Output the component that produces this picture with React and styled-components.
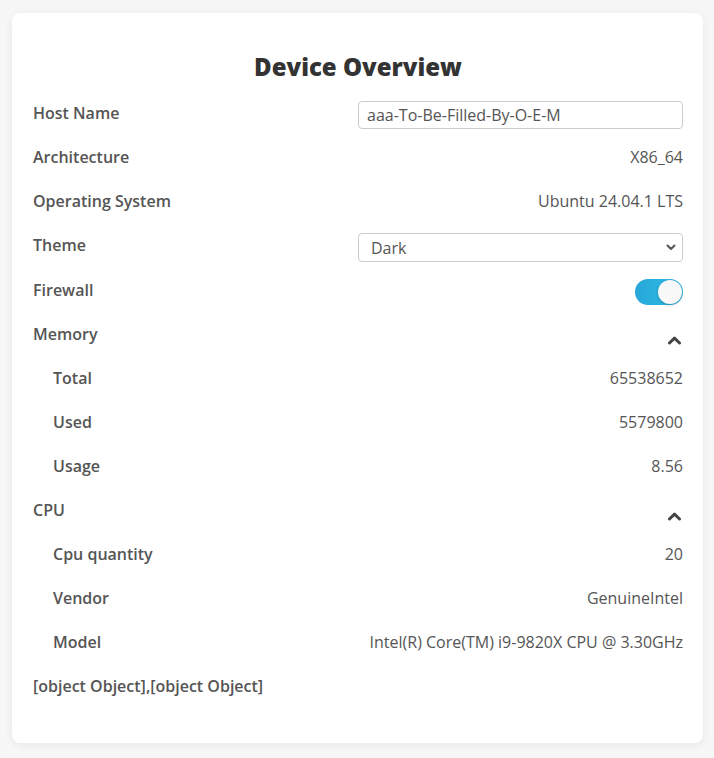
import React, { useState } from "react";
import styled, { createGlobalStyle } from "styled-components";

const Global = createGlobalStyle`
  html, body { margin: 0; padding: 0; background: #f7f7f7; }
  body { font-family: "Open Sans", "Liberation Sans", sans-serif; }
  * { box-sizing: border-box; }
`;

const Page = styled.div`
  padding: 13px 11px 15px 12px;
`;

const Card = styled.div`
  background: #fff;
  border-radius: 8px;
  box-shadow: 0 2px 10px rgba(0, 0, 0, 0.07);
  padding: 20px 20px 25px 21px;
`;

const Title = styled.h2`
  margin: 17px 0 18px;
  text-align: center;
  font-size: 24px;
  line-height: 33px;
  font-weight: 800;
  color: #333;
`;

const Row = styled.div`
  display: grid;
  grid-template-columns: 1fr 1fr;
  align-items: start;
  height: ${(p) => p.$h || 44}px;
  padding-left: ${(p) => (p.$sub ? "20px" : "0")};
`;

const Label = styled.div`
  font-size: 16px;
  line-height: 24px;
  font-weight: 600;
  color: #555;
  white-space: nowrap;
`;

const Value = styled.div`
  font-size: 16px;
  line-height: 24px;
  font-weight: 400;
  color: #555;
  text-align: right;
  white-space: nowrap;
  display: flex;
  justify-content: flex-end;
`;

const TextInput = styled.input`
  width: 100%;
  height: 28px;
  border: 1px solid #ccc;
  border-radius: 4px;
  padding: 0 8px;
  font-family: inherit;
  font-size: 16px;
  color: #555;
  outline: none;
  background: #fff;
`;

const SelectWrap = styled.div`
  position: relative;
  width: 100%;
`;

const Select = styled.select`
  width: 100%;
  height: 29px;
  border: 1px solid #ccc;
  border-radius: 4px;
  padding: 0 28px 0 12px;
  font-family: inherit;
  font-size: 16px;
  color: #555;
  background: #fff;
  appearance: none;
  outline: none;
`;

const SelectArrow = styled.svg`
  position: absolute;
  right: 7px;
  top: 11px;
  pointer-events: none;
`;

const Track = styled.button`
  position: relative;
  width: 48px;
  height: 26px;
  margin-top: 1px;
  border: none;
  border-radius: 13px;
  padding: 0;
  cursor: pointer;
  background: ${(p) => (p.$on ? "linear-gradient(90deg, #26a7d8, #30bde6)" : "#ccc")};
`;

const Knob = styled.span`
  position: absolute;
  top: 1px;
  left: ${(p) => (p.$on ? "23px" : "1px")};
  width: 24px;
  height: 24px;
  border-radius: 50%;
  background: #f8f8f8;
  box-shadow: 0 1px 3px rgba(0, 0, 0, 0.25);
`;

const Chevron = styled.svg`
  margin-top: 14px;
  margin-right: 2px;
`;

function Toggle() {
  const [on, setOn] = useState(true);
  return (
    <Track $on={on} onClick={() => setOn(!on)} aria-label="Firewall">
      <Knob $on={on} />
    </Track>
  );
}

function ChevronUp() {
  return (
    <Chevron width="13" height="9" viewBox="0 0 13 9">
      <polyline points="1.5,7 6.5,2.2 11.5,7" fill="none" stroke="#444" strokeWidth="3" strokeLinecap="round" strokeLinejoin="round" />
    </Chevron>
  );
}

export default function App() {
  return (
    <Page>
      <Global />
      <Card>
        <Title>Device Overview</Title>
        <Row>
          <Label>Host Name</Label>
          <TextInput defaultValue="aaa-To-Be-Filled-By-O-E-M" />
        </Row>
        <Row>
          <Label>Architecture</Label>
          <Value>X86_64</Value>
        </Row>
        <Row>
          <Label>Operating System</Label>
          <Value>Ubuntu 24.04.1 LTS</Value>
        </Row>
        <Row $h={45}>
          <Label>Theme</Label>
          <SelectWrap>
            <Select defaultValue="Dark">
              <option>Light</option>
              <option>Dark</option>
            </Select>
            <SelectArrow width="10" height="7" viewBox="0 0 10 7">
              <polyline points="1.5,1.5 5,5 8.5,1.5" fill="none" stroke="#555" strokeWidth="2" strokeLinecap="round" strokeLinejoin="round" />
            </SelectArrow>
          </SelectWrap>
        </Row>
        <Row>
          <Label>Firewall</Label>
          <Value><Toggle /></Value>
        </Row>
        <Row>
          <Label>Memory</Label>
          <Value><ChevronUp /></Value>
        </Row>
        <Row $sub>
          <Label>Total</Label>
          <Value>65538652</Value>
        </Row>
        <Row $sub>
          <Label>Used</Label>
          <Value>5579800</Value>
        </Row>
        <Row $sub>
          <Label>Usage</Label>
          <Value>8.56</Value>
        </Row>
        <Row>
          <Label>CPU</Label>
          <Value><ChevronUp /></Value>
        </Row>
        <Row $sub>
          <Label>Cpu quantity</Label>
          <Value>20</Value>
        </Row>
        <Row $sub>
          <Label>Vendor</Label>
          <Value>GenuineIntel</Value>
        </Row>
        <Row $sub>
          <Label>Model</Label>
          <Value>Intel(R) Core(TM) i9-9820X CPU @ 3.30GHz</Value>
        </Row>
        <Row>
          <Label>[object Object],[object Object]</Label>
        </Row>
      </Card>
    </Page>
  );
}
